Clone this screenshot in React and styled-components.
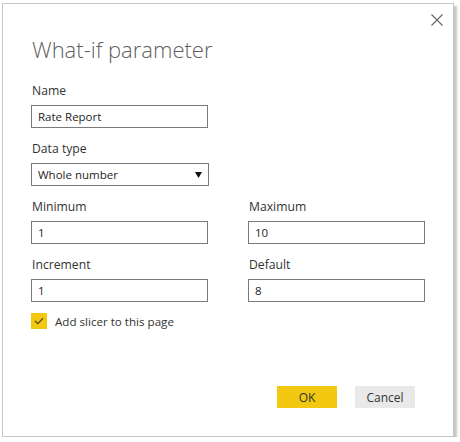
import React, { useState } from 'react'
import styled, { createGlobalStyle } from 'styled-components'

const GlobalStyle = createGlobalStyle`
  html, body {
    margin: 0;
    padding: 0;
    background: #ffffff;
  }
  body {
    font-family: "Open Sans", "Noto Sans", sans-serif;
  }
`

const Page = styled.div`
  padding: 3px 0 0 2px;
`

const Dialog = styled.div`
  position: relative;
  box-sizing: border-box;
  width: 452px;
  height: 434px;
  border: 1px solid #c6c6c6;
  background: #fff;
  box-shadow: 3px 3px 2px rgba(0, 0, 0, 0.22);
  padding: 28px 28px 28px 28px;
  display: flex;
  flex-direction: column;
`

const CloseButton = styled.button`
  position: absolute;
  top: 8px;
  right: 8px;
  width: 16px;
  height: 16px;
  padding: 0;
  border: none;
  background: transparent;
  cursor: pointer;
  display: flex;
  align-items: center;
  justify-content: center;
`

const Title = styled.h1`
  margin: 1px 0 0 1px;
  font-weight: 300;
  font-size: 22px;
  line-height: 32px;
  color: #5f5f5f;
`

const Fields = styled.div`
  margin-top: 17px;
  display: grid;
  grid-template-columns: 177px 177px;
  column-gap: 40px;
  row-gap: 12px;
`

const Field = styled.div`
  display: flex;
  flex-direction: column;
`

const Label = styled.label`
  font-size: 12.2px;
  line-height: 18px;
  color: #333;
  margin: 0 0 5px 1px;
`

const Input = styled.input`
  box-sizing: border-box;
  width: 177px;
  height: 23px;
  border: 1px solid #7a7a7a;
  padding: 0 6px;
  font-family: inherit;
  font-size: 11.5px;
  color: #252423;
  outline: none;
`

const SelectBox = styled.div`
  box-sizing: border-box;
  width: 178px;
  height: 23px;
  border: 1px solid #7a7a7a;
  padding: 0 6px;
  display: flex;
  align-items: center;
  justify-content: space-between;
  font-size: 11.5px;
  color: #252423;
`

const CheckRow = styled.label`
  margin-top: 11px;
  display: flex;
  align-items: center;
  gap: 8px;
  font-size: 11.6px;
  color: #333;
  cursor: pointer;
`

const CheckBox = styled.span`
  width: 16px;
  height: 16px;
  background: ${(p) => (p.$on ? '#f2c811' : '#fff')};
  border: ${(p) => (p.$on ? 'none' : '1px solid #7a7a7a')};
  box-sizing: border-box;
  display: flex;
  align-items: center;
  justify-content: center;
`

const Footer = styled.div`
  margin-top: auto;
  padding-right: 10px;
  display: flex;
  justify-content: flex-end;
  gap: 18px;
`

const Button = styled.button`
  width: 60px;
  height: 22px;
  border: none;
  padding: 0;
  font-family: inherit;
  font-size: 12px;
  color: #333;
  background: ${(p) => (p.$primary ? '#f2c811' : '#e9e9e9')};
  cursor: pointer;
`

function App() {
  const [values, setValues] = useState({
    name: 'Rate Report',
    minimum: '1',
    maximum: '10',
    increment: '1',
    default: '8',
  })
  const [slicer, setSlicer] = useState(true)

  const change = (event) => {
    setValues({ ...values, [event.target.name]: event.target.value })
  }

  return (
    <Page>
      <GlobalStyle />
      <Dialog>
        <CloseButton aria-label="Close">
          <svg width="12" height="12" viewBox="0 0 12 12">
            <path d="M0.5 0.5 L11.5 11.5 M11.5 0.5 L0.5 11.5" stroke="#666" strokeWidth="1.1" />
          </svg>
        </CloseButton>
        <Title>What-if parameter</Title>
        <Fields>
          <Field>
            <Label>Name</Label>
            <Input name="name" value={values.name} onChange={change} />
          </Field>
          <div />
          <Field>
            <Label>Data type</Label>
            <SelectBox>
              <span>Whole number</span>
              <svg width="7" height="6" viewBox="0 0 7 6">
                <path d="M0 0 H7 L3.5 6 Z" fill="#111" />
              </svg>
            </SelectBox>
          </Field>
          <div />
          <Field>
            <Label>Minimum</Label>
            <Input name="minimum" value={values.minimum} onChange={change} />
          </Field>
          <Field>
            <Label>Maximum</Label>
            <Input name="maximum" value={values.maximum} onChange={change} />
          </Field>
          <Field>
            <Label>Increment</Label>
            <Input name="increment" value={values.increment} onChange={change} />
          </Field>
          <Field>
            <Label>Default</Label>
            <Input name="default" value={values.default} onChange={change} />
          </Field>
        </Fields>
        <CheckRow onClick={() => setSlicer(!slicer)}>
          <CheckBox $on={slicer}>
            {slicer && (
              <svg width="10" height="8" viewBox="0 0 10 8">
                <path d="M1 4 L3.8 6.6 L9 1.2" fill="none" stroke="#5a4b12" strokeWidth="1.3" />
              </svg>
            )}
          </CheckBox>
          Add slicer to this page
        </CheckRow>
        <Footer>
          <Button $primary>OK</Button>
          <Button>Cancel</Button>
        </Footer>
      </Dialog>
    </Page>
  )
}

export default App
